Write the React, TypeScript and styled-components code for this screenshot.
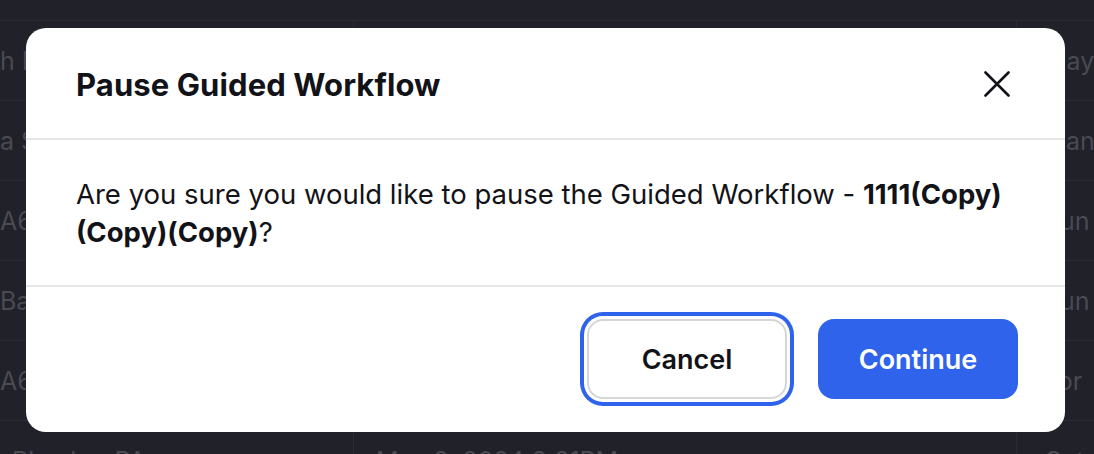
import React from "react";
import styled, { createGlobalStyle } from "styled-components";

const Global = createGlobalStyle`
  html, body { margin: 0; padding: 0; }
  body {
    width: 1094px;
    height: 454px;
    overflow: hidden;
    background: #202129;
    font-family: Inter, "Noto Sans", "Liberation Sans", sans-serif;
    -webkit-font-smoothing: antialiased;
  }
`;

const Page = styled.div`
  position: relative;
  width: 1094px;
  height: 454px;
  overflow: hidden;
  background: #202129;
`;

const Table = styled.div`
  display: flex;
  flex-direction: column;
  padding-top: 20px;
`;

const Row = styled.div`
  display: grid;
  grid-template-columns: 353px 663px 1fr;
  height: 80px;
  border-top: 1px solid #2a2b33;
  box-sizing: border-box;
`;

const Cell = styled.div<{ $indent?: number }>`
  display: flex;
  align-items: center;
  padding-left: 22px;
  color: #494a52;
  font-size: 25px;
  white-space: nowrap;
  overflow: hidden;
  & + & { border-left: 1px solid #2a2b33; }
  &:first-child { padding-left: ${(p) => p.$indent ?? 12}px; }
  &:last-child { padding-left: 27px; }
`;

const Modal = styled.div`
  position: absolute;
  left: 26px;
  top: 28px;
  width: 1039px;
  height: 404px;
  background: #ffffff;
  border-radius: 20px;
  display: flex;
  flex-direction: column;
  overflow: hidden;
`;

const Header = styled.div`
  height: 112px;
  box-sizing: border-box;
  padding: 2px 50px 0;
  display: flex;
  align-items: center;
  justify-content: space-between;
  border-bottom: 2px solid #e6e6e8;
`;

const Title = styled.h2`
  margin: 0;
  font-size: 31px;
  font-weight: 700;
  color: #121318;
  letter-spacing: 0.1px;
`;

const CloseButton = styled.button`
  border: none;
  background: none;
  padding: 0;
  width: 26px;
  height: 26px;
  margin-right: 5px;
  display: flex;
  align-items: center;
  justify-content: center;
  cursor: pointer;
`;

const Body = styled.div`
  padding: 35px 50px 34px;
  border-bottom: 2px solid #e6e6e8;
  font-size: 27.5px;
  line-height: 38px;
  color: #121318;
`;

const Strong = styled.b`
  font-weight: 700;
`;

const Footer = styled.div`
  flex: 1;
  display: flex;
  align-items: center;
  justify-content: flex-end;
  gap: 31px;
  padding: 0 47px 1px;
`;

const Button = styled.button<{ $primary?: boolean }>`
  width: 200px;
  height: 80px;
  box-sizing: border-box;
  border-radius: 16px;
  font-family: inherit;
  font-size: 27px;
  font-weight: 600;
  cursor: pointer;
  border: ${(p) => (p.$primary ? "none" : "2px solid #d6d6d8")};
  background: ${(p) => (p.$primary ? "#2f63eb" : "#ffffff")};
  color: ${(p) => (p.$primary ? "#ffffff" : "#121318")};
  box-shadow: ${(p) =>
    p.$primary ? "none" : "0 0 0 3px #ffffff, 0 0 0 7px #2f63eb"};
`;

const rows: { a: string; indent: number; b: string; c: string }[] = [
  { a: "h Kumar", indent: 0, b: "May 8, 2024 8:21PM", c: "May" },
  { a: "a Sharma", indent: 0, b: "May 8, 2024 8:21PM", c: "Plan" },
  { a: "A6 Team", indent: 0, b: "May 8, 2024 8:21PM", c: "Run" },
  { a: "Bajaj", indent: 0, b: "May 8, 2024 8:21PM", c: "Run" },
  { a: "A6 Team", indent: 0, b: "May 8, 2024 8:21PM", c: "For" },
  { a: "Bhaskar PA", indent: 12, b: "May 8, 2024 8:21PM", c: "Category" },
];

export default function App() {
  return (
    <>
      <Global />
      <Page>
        <Table>
          {rows.map((r, i) => (
            <Row key={i}>
              <Cell $indent={r.indent}>{r.a}</Cell>
              <Cell>{r.b}</Cell>
              <Cell>{r.c}</Cell>
            </Row>
          ))}
        </Table>
        <Modal role="dialog">
          <Header>
            <Title>Pause Guided Workflow</Title>
            <CloseButton aria-label="Close">
              <svg width="26" height="26" viewBox="0 0 26 26">
                <path
                  d="M1.5 1.5 L24.5 24.5 M24.5 1.5 L1.5 24.5"
                  stroke="#121318"
                  strokeWidth="2.6"
                  strokeLinecap="round"
                  fill="none"
                />
              </svg>
            </CloseButton>
          </Header>
          <Body>
            Are you sure you would like to pause the Guided Workflow -{" "}
            <Strong>1111(Copy)(Copy)(Copy)</Strong>?
          </Body>
          <Footer>
            <Button>Cancel</Button>
            <Button $primary>Continue</Button>
          </Footer>
        </Modal>
      </Page>
    </>
  );
}
